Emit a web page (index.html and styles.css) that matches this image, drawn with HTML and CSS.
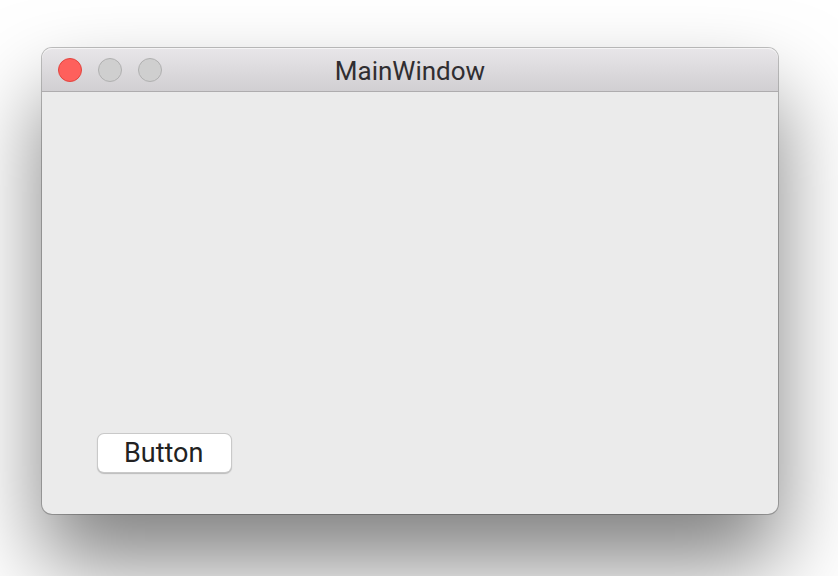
FILE: index.html
```html
<!DOCTYPE html>
<html lang="en">
<head>
<meta charset="utf-8">
<meta name="viewport" content="width=device-width, initial-scale=1">
<title>MainWindow</title>
<link rel="stylesheet" href="styles.css">
</head>
<body>
<main class="window">
  <header class="titlebar">
    <div class="controls">
      <button class="control control-close" type="button" aria-label="Close"></button>
      <button class="control" type="button" aria-label="Minimize" disabled></button>
      <button class="control" type="button" aria-label="Zoom" disabled></button>
    </div>
    <h1 class="title">MainWindow</h1>
  </header>
  <section class="content">
    <button class="push-button" type="button">Button</button>
  </section>
</main>
</body>
</html>
```
FILE: styles.css
```css
* {
  box-sizing: border-box;
}

body {
  display: flex;
  min-height: 100vh;
  margin: 0;
  padding: 48px 60px 62px 42px;
  overflow: hidden;
  background: #fff;
  font-family: Roboto, "Liberation Sans", sans-serif;
}

.window {
  display: flex;
  flex: 1;
  flex-direction: column;
  border-radius: 10px;
  background: #ebebeb;
  box-shadow:
    0 0 0 1px rgba(0, 0, 0, 0.24),
    0 48px 86px rgba(0, 0, 0, 0.5);
}

.titlebar {
  display: grid;
  grid-template-columns: 1fr auto 1fr;
  align-items: center;
  height: 44px;
  padding: 0 16px;
  border-bottom: 1px solid #aeacae;
  border-radius: 10px 10px 0 0;
  background: linear-gradient(#e8e6e9, #d1cfd2);
  box-shadow: inset 0 1px #f5f4f5;
}

.controls {
  display: flex;
  gap: 16px;
}

.control {
  width: 24px;
  height: 24px;
  padding: 0;
  border: 1px solid #b0b0b0;
  border-radius: 50%;
  background: #cfcfcf;
}

.control-close {
  border-color: #e2453f;
  background: #fe605c;
}

.title {
  margin: 0;
  padding-top: 2px;
  color: #302e31;
  font-size: 26px;
  font-weight: 400;
  line-height: 32px;
}

.content {
  display: flex;
  flex: 1;
  align-items: flex-end;
  padding: 42px 56px;
}

.push-button {
  height: 38px;
  padding: 0 28px 0 26px;
  border: 0;
  border-radius: 6px;
  background: #fff;
  box-shadow:
    0 0 0 1px #c9c9c9,
    0 1px 1px 1px rgba(0, 0, 0, 0.2);
  color: #222;
  font: inherit;
  font-size: 27px;
  line-height: 38px;
}
```
